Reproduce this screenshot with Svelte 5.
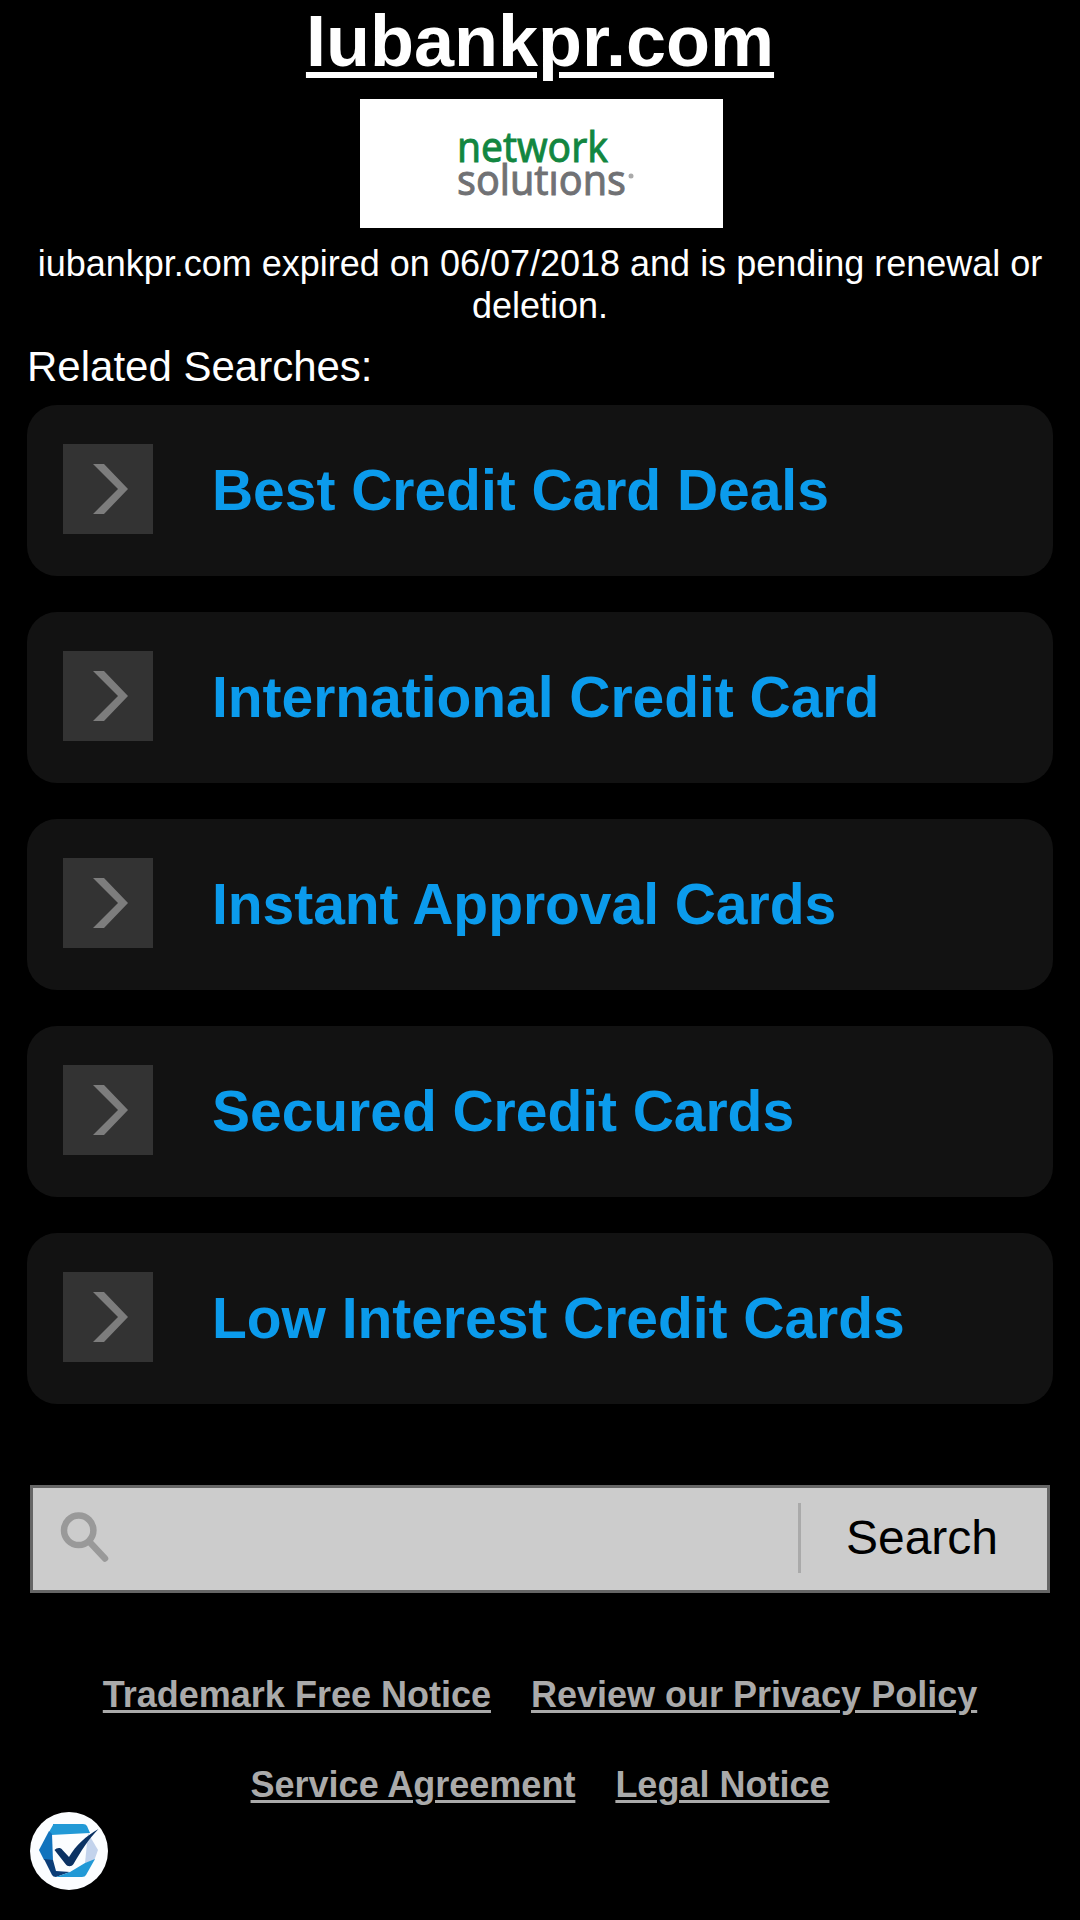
<script>
  const searches = [
    "Best Credit Card Deals",
    "International Credit Card",
    "Instant Approval Cards",
    "Secured Credit Cards",
    "Low Interest Credit Cards",
  ];
  const footerRows = [
    ["Trademark Free Notice", "Review our Privacy Policy"],
    ["Service Agreement", "Legal Notice"],
  ];
  let query = "";
</script>

<div class="page">
  <h1>Iubankpr.com</h1>

  <svg class="logo" viewBox="0 0 363 129" role="img" aria-label="network solutions">
    <rect width="363" height="129" fill="#fff" />
    <text x="97" y="63" textLength="151" lengthAdjust="spacingAndGlyphs" fill="#128640" stroke="#128640">network</text>
    <text x="97" y="96" textLength="169" lengthAdjust="spacingAndGlyphs" fill="#707174" stroke="#707174">solutıons</text>
    <circle cx="271" cy="77" r="2.500" fill="#aaa" />
  </svg>

  <p class="expired">iubankpr.com expired on 06/07/2018 and is pending renewal or deletion.</p>

  <h2>Related Searches:</h2>

  <ul class="searches">
    {#each searches as search (search)}
      <li>
        <span class="arrow">
          <svg viewBox="0 0 90 90">
            <path d="M30 20h11l24 25-24 25H30l25-25z" fill="#7d7d7d" />
          </svg>
        </span>
        <a href="#top">{search}</a>
      </li>
    {/each}
  </ul>

  <form class="search" on:submit|preventDefault>
    <svg class="glass" viewBox="0 0 51 54">
      <circle cx="18.700" cy="18.300" r="14.700" />
      <path d="M30.500 31l14.500 15.500" />
    </svg>
    <input type="text" aria-label="Search" bind:value={query} />
    <button type="submit">Search</button>
  </form>

  <footer>
    {#each footerRows as row}
      <div class="row">
        {#each row as link (link)}
          <a href="#top">{link}</a>
        {/each}
      </div>
    {/each}
  </footer>

  <div class="badge">
    <svg viewBox="0 0 78 78">
      <circle cx="39" cy="39" r="39" fill="#fbfdff" />
      <path d="M23 12h30q3 0 4 2l3 7-39 2-2-3 4-7z" fill="#2199d6" />
      <path d="M19 19l3 3 1 27-9-1-5-10z" fill="#1173bd" />
      <path d="M58 21l10 17-4 11-9 2z" fill="#c3d3ec" />
      <path d="M14 47l9 1 3 11 14 1-14 5q-3 0-4-2z" fill="#0b3d78" />
      <path d="M55 51l10-4-9 16q-1 2-4 2H26l14-5z" fill="#2199d6" />
      <path d="M24.500 38c2-2 6-3 8 0l6.500 7c7-12 17-21 29.500-28-10 10-18 23-25 35-2 3-6 3-8 0z" fill="#0b3263" />
    </svg>
  </div>
</div>

<style>
  :global(body) {
    background: #000;
  }
  .page {
    position: relative;
    box-sizing: border-box;
    height: 1920px;
    padding: 0 27px;
    overflow: hidden;
    background: #000;
    color: #fff;
    font-family: "Liberation Sans", Arial, sans-serif;
  }
  h1 {
    margin: 0;
    font-size: 72px;
    line-height: 82px;
    text-align: center;
    text-decoration: underline;
    text-decoration-thickness: 6px;
    text-underline-offset: 6px;
  }
  .logo {
    display: block;
    width: 363px;
    height: 129px;
    margin: 17px 0 0 333px;
  }
  .logo text {
    font-family: "Noto Sans", "Open Sans", sans-serif;
    font-size: 42px;
    stroke-width: 0.9;
  }
  .expired {
    margin: 15px 0 0;
    font-size: 36px;
    line-height: 42px;
    text-align: center;
  }
  h2 {
    margin: 16px 0 15px;
    font-size: 42px;
    font-weight: normal;
    line-height: 47px;
  }
  .searches {
    display: flex;
    flex-direction: column;
    gap: 36px;
    margin: 0;
    padding: 0;
    list-style: none;
  }
  .searches li {
    display: flex;
    align-items: center;
    box-sizing: border-box;
    height: 171px;
    padding: 0 36px 3px;
    border-radius: 30px;
    background: #121212;
  }
  .arrow {
    width: 90px;
    height: 90px;
    margin-right: 59px;
    background: #333;
  }
  .arrow svg {
    display: block;
  }
  .searches a {
    padding-top: 2px;
    color: #0b9bec;
    font-size: 57px;
    font-weight: bold;
    letter-spacing: -0.04px;
    text-decoration: none;
  }
  .search {
    display: flex;
    align-items: center;
    box-sizing: border-box;
    height: 108px;
    margin: 81px 3px 0;
    border: 3px solid #666;
    background: #ccc;
  }
  .glass {
    width: 51px;
    height: 54px;
    margin-left: 27px;
    fill: none;
    stroke: #999;
    stroke-width: 6.5;
    stroke-linecap: round;
  }
  .search input {
    flex: 1;
    min-width: 0;
    height: 70px;
    padding: 0 20px;
    border: 0;
    outline: 0;
    background: transparent;
    font: 42px "Liberation Sans", Arial, sans-serif;
  }
  .search button {
    width: 249px;
    height: 70px;
    margin-bottom: 2px;
    padding: 0 4px 2px 0;
    border: 0;
    border-left: 3px solid #aaa;
    background: transparent;
    color: #000;
    font: 48px "Liberation Sans", Arial, sans-serif;
  }
  footer {
    margin-top: 81px;
  }
  .row {
    display: flex;
    justify-content: center;
    gap: 40px;
    height: 90px;
  }
  .row a {
    color: #aaa;
    font-size: 36px;
    font-weight: bold;
    line-height: 42px;
    text-decoration-thickness: 3px;
    text-underline-offset: 3px;
  }
  .badge {
    position: absolute;
    left: 30px;
    top: 1812px;
    width: 78px;
    height: 78px;
  }
</style>
